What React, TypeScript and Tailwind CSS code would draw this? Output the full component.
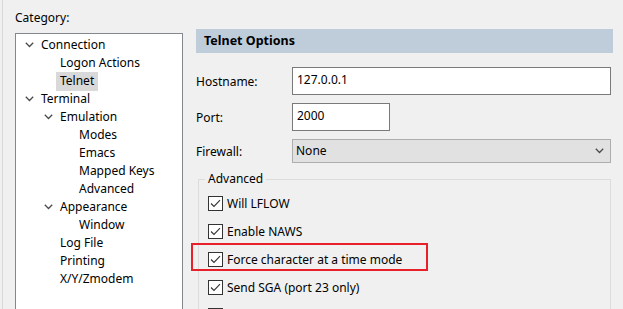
import React from "react";

const Chev = ({ className = "" }: { className?: string }) => (
  <svg width="9" height="6" viewBox="0 0 9 6" className={className}>
    <path d="M0.8 0.8 L4.5 4.5 L8.2 0.8" fill="none" stroke="#4a4a4a" strokeWidth="1.3" />
  </svg>
);

type Node = { label: string; level: number; expand?: boolean; selected?: boolean };
const nodes: Node[] = [
  { label: "Connection", level: 0, expand: true },
  { label: "Logon Actions", level: 1 },
  { label: "Telnet", level: 1, selected: true },
  { label: "Terminal", level: 0, expand: true },
  { label: "Emulation", level: 1, expand: true },
  { label: "Modes", level: 2 },
  { label: "Emacs", level: 2 },
  { label: "Mapped Keys", level: 2 },
  { label: "Advanced", level: 2 },
  { label: "Appearance", level: 1, expand: true },
  { label: "Window", level: 2 },
  { label: "Log File", level: 1 },
  { label: "Printing", level: 1 },
  { label: "X/Y/Zmodem", level: 1 },
];

const padFor = ["pl-[21px]", "pl-[40px]", "pl-[59px]"];

const Check = ({ label }: { label?: string }) => (
  <div className="flex items-center h-[15px]">
    <div className="w-[15px] h-[15px] border border-[#333333] bg-white flex items-center justify-center">
      <svg width="11" height="9" viewBox="0 0 11 9">
        <path d="M1 4.5 L4 7.5 L10 1.2" fill="none" stroke="#333" strokeWidth="1.1" />
      </svg>
    </div>
    {label && <span className="ml-[4px] leading-[15px]">{label}</span>}
  </div>
);

export default function App() {
  return (
    <div
      className="w-[623px] h-[309px] overflow-hidden bg-[#f0f0f0] relative text-[12px] text-black"
      style={{ fontFamily: '"Noto Sans", "Open Sans", sans-serif' }}
    >
      <div className="flex h-full ml-[2px] border-l border-[#d9d9d9]">
        <div className="w-[180px] shrink-0 pl-[12px] pt-[10px]">
          <div className="leading-[16px] h-[16px]">Category:</div>
          <div className="mt-[7px] w-[168px] h-[320px] bg-white border border-[#828790] pt-[2px]">
            {nodes.map((n) => (
              <div key={n.label} className={`h-[18px] flex items-center relative ${padFor[n.level]}`}>
                {n.expand && (
                  <div className="absolute top-[6px]" style={{ left: n.level === 0 ? 9 : 28 }}>
                    <Chev />
                  </div>
                )}
                <span
                  className={`leading-[18px] h-[19px] px-[4px] ${n.selected ? "bg-[#d9d9d9]" : ""}`}
                >
                  {n.label}
                </span>
              </div>
            ))}
          </div>
        </div>
        <div className="flex-1 pl-[13px] pt-[29px]">
          <div className="w-[417px] h-[24px] bg-[#bfcddb] flex items-center pl-[8px] font-bold text-[12.5px]">
            Telnet Options
          </div>
          <div className="mt-[14px] flex items-center">
            <div className="w-[96px] pt-[1px]">Hostname:</div>
            <div className="w-[319px] h-[28px] bg-white border border-[#7a7a7a] pl-[4px] pt-[3px] leading-[18px]">
              127.0.0.1
            </div>
          </div>
          <div className="mt-[8px] flex items-center">
            <div className="w-[96px] pt-[1px]">Port:</div>
            <div className="w-[98px] h-[28px] bg-white border border-[#7a7a7a] pl-[4px] pt-[3px] leading-[18px]">
              2000
            </div>
          </div>
          <div className="mt-[8px] flex items-center">
            <div className="w-[96px] pt-[1px]">Firewall:</div>
            <div className="w-[319px] h-[24px] bg-[#e1e1e1] border border-[#adadad] pl-[3px] flex items-center justify-between pr-[6px]">
              <span>None</span>
              <Chev />
            </div>
          </div>
          <div className="mt-[16px] ml-[2px] w-[413px] h-[200px] border border-[#dcdcdc] relative pl-[9px] pt-[16px] flex flex-col gap-[13px]">
            <div className="absolute -top-[9px] left-[6px] px-[3px] bg-[#f0f0f0] leading-[16px]">Advanced</div>
            <Check label="Will LFLOW" />
            <Check label="Enable NAWS" />
            <Check label="Force character at a time mode" />
            <Check label="Send SGA (port 23 only)" />
            <Check />
          </div>
        </div>
      </div>
      <div className="absolute left-[191px] top-[243px] w-[237px] h-[28px] border-2 border-[#e8202a]" />
    </div>
  );
}
